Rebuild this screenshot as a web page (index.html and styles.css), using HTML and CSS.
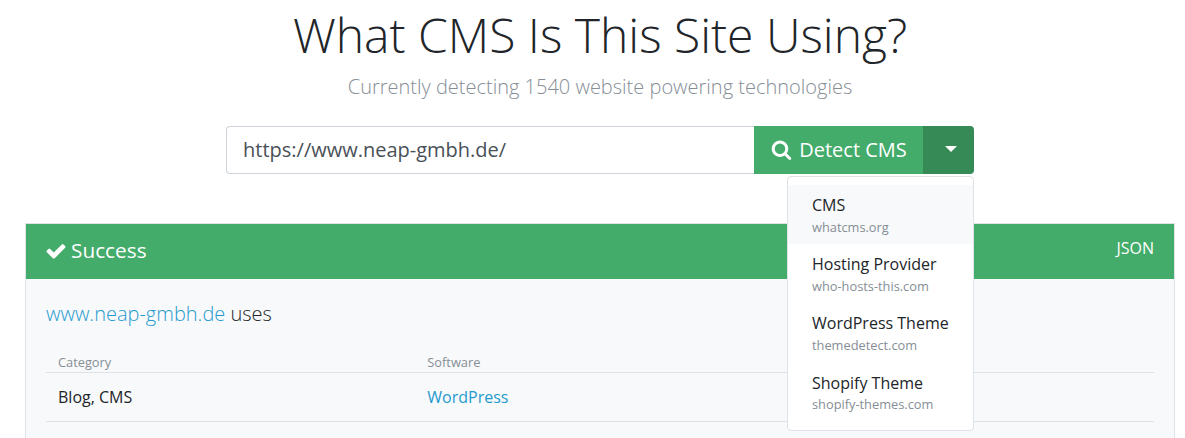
FILE: index.html
```html
<!DOCTYPE html>
<html lang="en">
<head>
    <meta charset="UTF-8">
    <meta name="viewport" content="width=device-width, initial-scale=1.0">
    <title>What CMS Is This Site Using?</title>
    <link rel="stylesheet" href="styles.css">
</head>
<body>

    <div class="container">
        <h1>What CMS Is This Site Using?</h1>
        <p class="lead">Currently detecting 1540 website powering technologies</p>

        <form class="search">
            <input class="search-input" type="text" value="https://www.neap-gmbh.de/">
            <button class="btn btn-detect" type="button">
                <svg class="icon-search" viewBox="0 0 1792 1792"><path d="M1216 832q0-185-131.500-316.500t-316.500-131.500-316.500 131.500-131.500 316.500 131.500 316.500 316.500 131.500 316.500-131.500 131.500-316.500zm512 832q0 52-38 90t-90 38q-54 0-90-38l-343-342q-179 124-399 124-143 0-273.500-55.500t-225-150-150-225-55.500-273.500 55.500-273.500 150-225 225-150 273.500-55.500 273.500 55.500 225 150 150 225 55.500 273.500q0 220-124 399l343 343q37 37 37 90z"/></svg>
                Detect CMS
            </button>
            <button class="btn btn-toggle" type="button"><span class="caret"></span></button>

            <div class="dropdown">
                <a class="dropdown-item active" href="#">CMS<small>whatcms.org</small></a>
                <a class="dropdown-item" href="#">Hosting Provider<small>who-hosts-this.com</small></a>
                <a class="dropdown-item" href="#">WordPress Theme<small>themedetect.com</small></a>
                <a class="dropdown-item" href="#">Shopify Theme<small>shopify-themes.com</small></a>
            </div>
        </form>

        <div class="card">
            <div class="card-header">
                <h2>
                    <svg class="icon-check" viewBox="0 0 1792 1792"><path d="M1671 566q0 40-28 68l-724 724-136 136q-28 28-68 28t-68-28l-136-136-362-362q-28-28-28-68t28-68l136-136q28-28 68-28t68 28l294 295 656-657q28-28 68-28t68 28l136 136q28 28 28 68z"/></svg>
                    Success
                </h2>
                <a class="json" href="#">JSON</a>
            </div>
            <div class="card-body">
                <p class="uses"><a href="#">www.neap-gmbh.de</a> uses</p>
                <table>
                    <thead>
                        <tr><th>Category</th><th>Software</th><th></th></tr>
                    </thead>
                    <tbody>
                        <tr><td>Blog, CMS</td><td><a href="#">WordPress</a></td><td></td></tr>
                    </tbody>
                </table>
            </div>
        </div>
    </div>

</body>
</html>
```

FILE: styles.css
```css
html, body {
    height: 100%;
    overflow: hidden;
}
body {
    font-family: 'Open Sans', sans-serif;
    font-size: 16px;
    line-height: 1.5;
    background-color: #fff;
    color: #212529;
    margin: 0;
}
a {
    color: #1f9bcf;
    text-decoration: none;
}
.container {
    padding: 0 10px 0 25px;
}
h1 {
    font-size: 48px;
    font-weight: 300;
    line-height: 60px;
    text-align: center;
    margin: 5px 0 0;
}
.lead {
    font-size: 20px;
    font-weight: 300;
    line-height: 30px;
    color: #868e96;
    text-align: center;
    margin: 7px 0 24px;
}
.search {
    display: flex;
    position: relative;
    width: 748px;
    height: 48px;
    margin-left: 201px;
}
.search-input {
    flex: 1;
    min-width: 0;
    font-family: inherit;
    font-size: 20px;
    color: #495057;
    padding: 0 16px 2px;
    border: 1px solid #ced4da;
    border-right: 0;
    border-radius: 4px 0 0 4px;
    outline: 0;
}
.btn {
    font-family: inherit;
    font-size: 20px;
    color: #fff;
    border: 0;
    padding: 0 0 2px;
}
.btn-detect {
    display: flex;
    align-items: center;
    justify-content: center;
    gap: 7px;
    width: 169px;
    padding-left: 1px;
    background-color: #43ac6a;
}
.btn-toggle {
    display: flex;
    align-items: center;
    justify-content: center;
    width: 51px;
    padding-left: 4px;
    background-color: #358a55;
    border-radius: 0 4px 4px 0;
}
.icon-search {
    width: 21px;
    height: 21px;
    fill: #fff;
}
.caret {
    width: 0;
    height: 0;
    border-top: 6px solid #fff;
    border-left: 6px solid transparent;
    border-right: 6px solid transparent;
}
.dropdown {
    position: absolute;
    top: 50px;
    right: 0;
    z-index: 10;
    width: 185px;
    padding: 8px 0;
    background-color: #fff;
    border: 1px solid #dfe2e6;
    border-radius: 4px;
}
.dropdown-item {
    display: block;
    padding: 8px 0 7.500px 24px;
    line-height: 24px;
    color: #212529;
}
.dropdown-item.active {
    background-color: #f8f9fa;
}
.dropdown-item small {
    display: block;
    margin-top: 0.5px;
    font-size: 12.8px;
    line-height: 19.2px;
    color: #868e96;
}
.card {
    margin-top: 49px;
    width: 1148px;
    border: 1px solid #dfe2e6;
    background-color: #f8f9fa;
    height: 400px;
}
.card-header {
    display: flex;
    justify-content: space-between;
    height: 55px;
    padding: 0 20px;
    background-color: #43ac6a;
    color: #fff;
}
.card-header h2 {
    display: flex;
    align-items: center;
    gap: 4.5px;
    margin: 0 0 2px;
    font-size: 20.8px;
    font-weight: 400;
}
.icon-check {
    width: 22px;
    height: 22px;
    margin-left: -1.5px;
    fill: #fff;
}
.json {
    color: #fff;
    line-height: 48px;
}
.card-body {
    padding: 20px 20px;
}
.uses {
    font-size: 20px;
    font-weight: 300;
    line-height: 30px;
    margin: 0 0 23px;
}
table {
    width: 100%;
    table-layout: fixed;
    border-collapse: collapse;
}
th {
    font-size: 12.8px;
    font-weight: 400;
    line-height: 20px;
    height: 20px;
    color: #868e96;
    text-align: left;
    padding: 0 12px;
    border-bottom: 1px solid #dfe2e6;
}
td {
    line-height: 24px;
    padding: 12px;
    border-bottom: 1px solid #dfe2e6;
}
```
